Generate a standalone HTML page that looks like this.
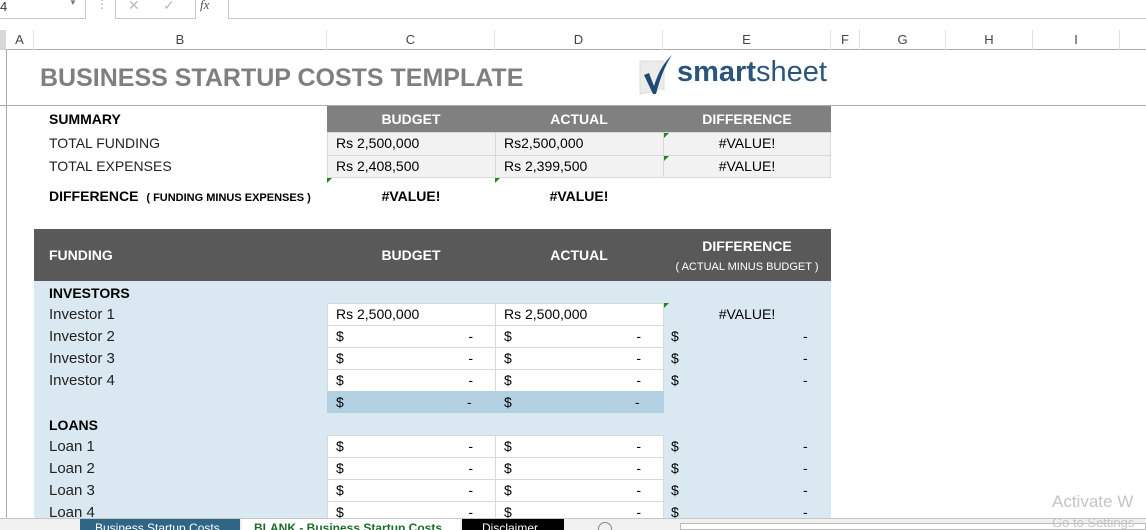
<!DOCTYPE html>
<html><head><meta charset="utf-8"><style>
*{margin:0;padding:0;box-sizing:border-box}
body{width:1146px;height:530px;overflow:hidden;background:#fff;position:relative;font-family:"Liberation Sans",sans-serif;color:#000}
.a{position:absolute}
.t{position:absolute;white-space:nowrap}
.cell{position:absolute;background:#fff;border:1px solid #d9d9d9;font-size:14px;line-height:20px;padding-left:8px}
.cell .d{position:absolute;right:22px;top:0}
.lbl{position:absolute;left:49px;font-size:15px;color:#222}
.hdr{position:absolute;top:30px;height:20px;font-size:13px;color:#444;text-align:center;line-height:20px;border-right:1px solid #e0e0e0}
.tri{position:absolute;width:0;height:0;border-top:5px solid #1a8a1a;border-right:5px solid transparent}
</style></head><body>
<div class="a" style="left:0;top:0;width:86px;height:19px;border:1px solid #c6c6c6;border-left:none;border-top:none"></div>
<div class="t" style="left:0;top:-1px;font-size:13px;color:#333">4</div>
<div class="t" style="left:69px;top:-2px;font-size:8px;color:#777">▼</div>
<div class="t" style="left:96px;top:-3px;font-size:12px;color:#aaa">⋮</div>
<div class="a" style="left:115px;top:0;width:81px;height:19px;border:1px solid #c6c6c6;border-top:none"></div>
<div class="t" style="left:128px;top:-3px;font-size:14px;color:#bbb">✕</div>
<div class="t" style="left:163px;top:-3px;font-size:14px;color:#bbb">✓</div>
<div class="t" style="left:200px;top:-3px;font-size:13px;color:#555;font-style:italic;font-family:'Liberation Serif',serif">fx</div>
<div class="a" style="left:228px;top:0;width:918px;height:19px;border:1px solid #c6c6c6;border-top:none;border-right:none"></div>
<div class="a" style="left:0;top:30px;width:1146px;height:20px;border-bottom:1px solid #ababab"></div>
<div class="a" style="left:0;top:30px;width:6px;height:20px;background:#d8d8d8"></div>
<div class="hdr" style="left:6px;width:28px">A</div>
<div class="hdr" style="left:34px;width:293px">B</div>
<div class="hdr" style="left:327px;width:168px">C</div>
<div class="hdr" style="left:495px;width:168px">D</div>
<div class="hdr" style="left:663px;width:168px">E</div>
<div class="hdr" style="left:831px;width:29px">F</div>
<div class="hdr" style="left:860px;width:86px">G</div>
<div class="hdr" style="left:946px;width:87px">H</div>
<div class="hdr" style="left:1033px;width:87px">I</div>
<div class="a" style="left:6px;top:50px;width:1px;height:468px;background:#ababab"></div>
<div class="a" style="left:0;top:105px;width:1146px;height:1px;background:#ababab"></div>
<div class="t" style="left:40px;top:64px;font-size:25px;font-weight:bold;color:#7f7f7f;letter-spacing:0px">BUSINESS STARTUP COSTS TEMPLATE</div>
<svg class="a" style="left:638px;top:54px" width="36" height="44" viewBox="0 0 36 44">
<path d="M2 7 L26 7 L26 36 Q22 33 18 37 L2 40 Z" fill="#ececec" stroke="#ddd"/>
<path d="M6 21 L11 19 L16 32 Q22 12 34 1 Q24 16 18 40 L15 40 Z" fill="#1d4b73"/>
</svg>
<div class="t" style="left:677px;top:56px;font-size:29px;color:#2b557a;letter-spacing:0px"><b>smart</b>sheet</div>
<div class="a" style="left:327px;top:106px;width:504px;height:26px;background:#808080"></div>
<div class="t" style="left:49px;top:111px;font-size:14px;font-weight:bold">SUMMARY</div>
<div class="t" style="left:327px;top:111px;width:168px;text-align:center;font-size:14px;font-weight:bold;color:#fff">BUDGET</div>
<div class="t" style="left:495px;top:111px;width:168px;text-align:center;font-size:14px;font-weight:bold;color:#fff">ACTUAL</div>
<div class="t" style="left:663px;top:111px;width:168px;text-align:center;font-size:14px;font-weight:bold;color:#fff">DIFFERENCE</div>
<div class="a" style="left:327px;top:132px;width:504px;height:46px;background:#f2f2f2;border:1px solid #d9d9d9"></div>
<div class="a" style="left:327px;top:155px;width:504px;height:1px;background:#d9d9d9"></div>
<div class="a" style="left:495px;top:132px;width:1px;height:46px;background:#d9d9d9"></div>
<div class="a" style="left:663px;top:132px;width:1px;height:46px;background:#d9d9d9"></div>
<div class="t lbl" style="top:135px;font-size:14px">TOTAL FUNDING</div>
<div class="t lbl" style="top:158px;font-size:14px">TOTAL EXPENSES</div>
<div class="t" style="left:336px;top:135px;font-size:14px">Rs 2,500,000</div>
<div class="t" style="left:504px;top:135px;font-size:14px">Rs2,500,000</div>
<div class="t" style="left:663px;top:135px;width:168px;text-align:center;font-size:14px">#VALUE!</div>
<div class="t" style="left:336px;top:158px;font-size:14px">Rs 2,408,500</div>
<div class="t" style="left:504px;top:158px;font-size:14px">Rs 2,399,500</div>
<div class="t" style="left:663px;top:158px;width:168px;text-align:center;font-size:14px">#VALUE!</div>
<div class="tri" style="left:664px;top:133px"></div><div class="tri" style="left:664px;top:156px"></div>
<div class="tri" style="left:327px;top:178px"></div><div class="tri" style="left:495px;top:178px"></div>
<div class="t" style="left:49px;top:188px;font-size:14px;font-weight:bold">DIFFERENCE <span style="font-size:11px;margin-left:4px">( FUNDING MINUS EXPENSES )</span></div>
<div class="t" style="left:327px;top:188px;width:168px;text-align:center;font-size:14px;font-weight:bold">#VALUE!</div>
<div class="t" style="left:495px;top:188px;width:168px;text-align:center;font-size:14px;font-weight:bold">#VALUE!</div>
<div class="a" style="left:34px;top:229px;width:797px;height:52px;background:#595959"></div>
<div class="t" style="left:49px;top:247px;font-size:14px;font-weight:bold;color:#fff">FUNDING</div>
<div class="t" style="left:327px;top:247px;width:168px;text-align:center;font-size:14px;font-weight:bold;color:#fff">BUDGET</div>
<div class="t" style="left:495px;top:247px;width:168px;text-align:center;font-size:14px;font-weight:bold;color:#fff">ACTUAL</div>
<div class="t" style="left:663px;top:238px;width:168px;text-align:center;font-size:14px;font-weight:bold;color:#fff">DIFFERENCE</div>
<div class="t" style="left:663px;top:261px;width:168px;text-align:center;font-size:11px;color:#fff">( ACTUAL MINUS BUDGET )</div>
<div class="a" style="left:34px;top:281px;width:797px;height:240px;background:#daE8f1"></div>
<div class="t" style="left:49px;top:285px;font-size:14px;font-weight:bold">INVESTORS</div>
<div class="t lbl" style="top:306px">Investor 1</div>
<div class="t lbl" style="top:328px">Investor 2</div>
<div class="t lbl" style="top:350px">Investor 3</div>
<div class="t lbl" style="top:372px">Investor 4</div>
<div class="cell" style="left:327px;top:303px;width:169px;height:23px">Rs 2,500,000</div>
<div class="cell" style="left:495px;top:303px;width:169px;height:23px">Rs 2,500,000</div>
<div class="tri" style="left:664px;top:303px"></div>
<div class="t" style="left:663px;top:306px;width:168px;text-align:center;font-size:14px">#VALUE!</div>
<div class="cell" style="left:327px;top:325px;width:169px;height:23px">$<span class="d">-</span></div>
<div class="cell" style="left:495px;top:325px;width:169px;height:23px">$<span class="d">-</span></div>
<div class="cell" style="left:327px;top:347px;width:169px;height:23px">$<span class="d">-</span></div>
<div class="cell" style="left:495px;top:347px;width:169px;height:23px">$<span class="d">-</span></div>
<div class="cell" style="left:327px;top:369px;width:169px;height:23px">$<span class="d">-</span></div>
<div class="cell" style="left:495px;top:369px;width:169px;height:23px">$<span class="d">-</span></div>
<div class="a" style="left:327px;top:391px;width:337px;height:22px;background:#b3d0e2"></div>
<div class="t" style="left:336px;top:394px;font-size:14px">$</div><div class="t" style="left:467px;top:394px;font-size:14px">-</div>
<div class="t" style="left:504px;top:394px;font-size:14px">$</div><div class="t" style="left:635px;top:394px;font-size:14px">-</div>
<div class="t" style="left:671px;top:328px;font-size:14px">$</div><div class="t" style="left:803px;top:328px;font-size:14px">-</div>
<div class="t" style="left:671px;top:350px;font-size:14px">$</div><div class="t" style="left:803px;top:350px;font-size:14px">-</div>
<div class="t" style="left:671px;top:372px;font-size:14px">$</div><div class="t" style="left:803px;top:372px;font-size:14px">-</div>
<div class="t" style="left:49px;top:417px;font-size:14px;font-weight:bold">LOANS</div>
<div class="t lbl" style="top:438px">Loan 1</div>
<div class="t lbl" style="top:460px">Loan 2</div>
<div class="t lbl" style="top:482px">Loan 3</div>
<div class="t lbl" style="top:504px">Loan 4</div>
<div class="cell" style="left:327px;top:435px;width:169px;height:23px">$<span class="d">-</span></div>
<div class="cell" style="left:495px;top:435px;width:169px;height:23px">$<span class="d">-</span></div>
<div class="cell" style="left:327px;top:457px;width:169px;height:23px">$<span class="d">-</span></div>
<div class="cell" style="left:495px;top:457px;width:169px;height:23px">$<span class="d">-</span></div>
<div class="cell" style="left:327px;top:479px;width:169px;height:23px">$<span class="d">-</span></div>
<div class="cell" style="left:495px;top:479px;width:169px;height:23px">$<span class="d">-</span></div>
<div class="cell" style="left:327px;top:501px;width:169px;height:23px">$<span class="d">-</span></div>
<div class="cell" style="left:495px;top:501px;width:169px;height:23px">$<span class="d">-</span></div>
<div class="t" style="left:671px;top:438px;font-size:14px">$</div><div class="t" style="left:803px;top:438px;font-size:14px">-</div>
<div class="t" style="left:671px;top:460px;font-size:14px">$</div><div class="t" style="left:803px;top:460px;font-size:14px">-</div>
<div class="t" style="left:671px;top:482px;font-size:14px">$</div><div class="t" style="left:803px;top:482px;font-size:14px">-</div>
<div class="t" style="left:671px;top:504px;font-size:14px">$</div><div class="t" style="left:803px;top:504px;font-size:14px">-</div>
<div class="t" style="left:1052px;top:492px;font-size:17px;color:#c4c4c4">Activate W</div>
<div class="a" style="left:0;top:518px;width:1146px;height:12px;background:#f0f0f0;border-top:1px solid #c6c6c6"></div>
<div class="a" style="left:80px;top:519px;width:160px;height:11px;background:#2f6685;overflow:hidden"><div class="t" style="left:15px;top:2px;font-size:12px;color:#fff">Business Startup Costs</div></div>
<div class="a" style="left:242px;top:519px;width:218px;height:11px;background:#fff;overflow:hidden"><div class="t" style="left:12px;top:2px;font-size:12px;font-weight:bold;color:#1e6b2e">BLANK - Business Startup Costs</div></div>
<div class="a" style="left:462px;top:519px;width:102px;height:11px;background:#000;overflow:hidden"><div class="t" style="left:20px;top:2px;font-size:12px;color:#fff">Disclaimer</div></div>
<div class="a" style="left:598px;top:522px;width:14px;height:8px;border:1px solid #888;border-bottom:none;border-radius:7px 7px 0 0"></div>
<div class="a" style="left:680px;top:523px;width:466px;height:7px;background:#fff;border:1px solid #bbb"></div>
<div class="t" style="left:1052px;top:515px;font-size:13px;color:#c4c4c4">Go to Settings</div>
</body></html>
